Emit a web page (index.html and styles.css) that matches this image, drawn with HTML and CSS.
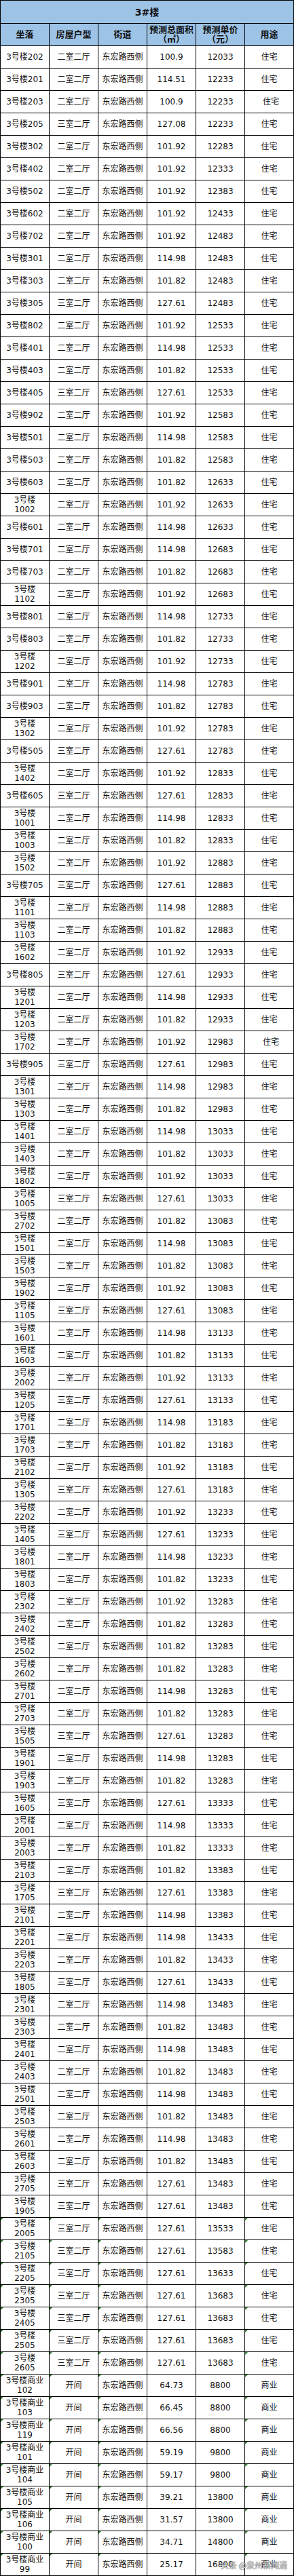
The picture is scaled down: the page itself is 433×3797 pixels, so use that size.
FILE: index.html
```html
<!DOCTYPE html>
<html lang="zh-CN">
<head>
<meta charset="utf-8">
<title>3#楼</title>
<link rel="stylesheet" href="styles.css">
</head>
<body>
<div class="sheet">
<table class="price">
<colgroup><col class="c"><col class="c"><col class="c"><col class="c"><col class="c"><col class="c"></colgroup>
<thead>
<tr class="title"><th colspan="6">3#楼</th></tr>
<tr class="head"><th>坐落</th><th>房屋户型</th><th>街道</th><th>预测总面积<br>（㎡）</th><th>预测单价<br>（元）</th><th>用途</th></tr>
</thead>
<tbody>
<tr><td>3号楼202</td><td>二室二厅</td><td>东宏路西侧</td><td>100.9</td><td>12033</td><td>住宅</td></tr>
<tr><td>3号楼201</td><td>二室二厅</td><td>东宏路西侧</td><td>114.51</td><td>12233</td><td>住宅</td></tr>
<tr><td>3号楼203</td><td>二室二厅</td><td>东宏路西侧</td><td>100.9</td><td>12233</td><td class="sh">住宅</td></tr>
<tr><td>3号楼205</td><td>三室二厅</td><td>东宏路西侧</td><td>127.08</td><td>12233</td><td>住宅</td></tr>
<tr><td>3号楼302</td><td>二室二厅</td><td>东宏路西侧</td><td>101.92</td><td>12283</td><td>住宅</td></tr>
<tr><td>3号楼402</td><td>二室二厅</td><td>东宏路西侧</td><td>101.92</td><td>12333</td><td>住宅</td></tr>
<tr><td>3号楼502</td><td>二室二厅</td><td>东宏路西侧</td><td>101.92</td><td>12383</td><td>住宅</td></tr>
<tr><td>3号楼602</td><td>二室二厅</td><td>东宏路西侧</td><td>101.92</td><td>12433</td><td>住宅</td></tr>
<tr><td>3号楼702</td><td>二室二厅</td><td>东宏路西侧</td><td>101.92</td><td>12483</td><td>住宅</td></tr>
<tr><td>3号楼301</td><td>二室二厅</td><td>东宏路西侧</td><td>114.98</td><td>12483</td><td>住宅</td></tr>
<tr><td>3号楼303</td><td>二室二厅</td><td>东宏路西侧</td><td>101.82</td><td>12483</td><td>住宅</td></tr>
<tr><td>3号楼305</td><td>三室二厅</td><td>东宏路西侧</td><td>127.61</td><td>12483</td><td>住宅</td></tr>
<tr><td>3号楼802</td><td>二室二厅</td><td>东宏路西侧</td><td>101.92</td><td>12533</td><td>住宅</td></tr>
<tr><td>3号楼401</td><td>二室二厅</td><td>东宏路西侧</td><td>114.98</td><td>12533</td><td>住宅</td></tr>
<tr><td>3号楼403</td><td>二室二厅</td><td>东宏路西侧</td><td>101.82</td><td>12533</td><td>住宅</td></tr>
<tr><td>3号楼405</td><td>三室二厅</td><td>东宏路西侧</td><td>127.61</td><td>12533</td><td>住宅</td></tr>
<tr><td>3号楼902</td><td>二室二厅</td><td>东宏路西侧</td><td>101.92</td><td>12583</td><td>住宅</td></tr>
<tr><td>3号楼501</td><td>二室二厅</td><td>东宏路西侧</td><td>114.98</td><td>12583</td><td>住宅</td></tr>
<tr><td>3号楼503</td><td>二室二厅</td><td>东宏路西侧</td><td>101.82</td><td>12583</td><td>住宅</td></tr>
<tr><td>3号楼603</td><td>二室二厅</td><td>东宏路西侧</td><td>101.82</td><td>12633</td><td>住宅</td></tr>
<tr><td>3号楼<br>1002</td><td>二室二厅</td><td>东宏路西侧</td><td>101.92</td><td>12633</td><td>住宅</td></tr>
<tr><td>3号楼601</td><td>二室二厅</td><td>东宏路西侧</td><td>114.98</td><td>12633</td><td>住宅</td></tr>
<tr><td>3号楼701</td><td>二室二厅</td><td>东宏路西侧</td><td>114.98</td><td>12683</td><td>住宅</td></tr>
<tr><td>3号楼703</td><td>二室二厅</td><td>东宏路西侧</td><td>101.82</td><td>12683</td><td>住宅</td></tr>
<tr><td>3号楼<br>1102</td><td>二室二厅</td><td>东宏路西侧</td><td>101.92</td><td>12683</td><td>住宅</td></tr>
<tr><td>3号楼801</td><td>二室二厅</td><td>东宏路西侧</td><td>114.98</td><td>12733</td><td>住宅</td></tr>
<tr><td>3号楼803</td><td>二室二厅</td><td>东宏路西侧</td><td>101.82</td><td>12733</td><td>住宅</td></tr>
<tr><td>3号楼<br>1202</td><td>二室二厅</td><td>东宏路西侧</td><td>101.92</td><td>12733</td><td>住宅</td></tr>
<tr><td>3号楼901</td><td>二室二厅</td><td>东宏路西侧</td><td>114.98</td><td>12783</td><td>住宅</td></tr>
<tr><td>3号楼903</td><td>二室二厅</td><td>东宏路西侧</td><td>101.82</td><td>12783</td><td>住宅</td></tr>
<tr><td>3号楼<br>1302</td><td>二室二厅</td><td>东宏路西侧</td><td>101.92</td><td>12783</td><td>住宅</td></tr>
<tr><td>3号楼505</td><td>三室二厅</td><td>东宏路西侧</td><td>127.61</td><td>12783</td><td>住宅</td></tr>
<tr><td>3号楼<br>1402</td><td>二室二厅</td><td>东宏路西侧</td><td>101.92</td><td>12833</td><td>住宅</td></tr>
<tr><td>3号楼605</td><td>三室二厅</td><td>东宏路西侧</td><td>127.61</td><td>12833</td><td>住宅</td></tr>
<tr><td>3号楼<br>1001</td><td>二室二厅</td><td>东宏路西侧</td><td>114.98</td><td>12833</td><td>住宅</td></tr>
<tr><td>3号楼<br>1003</td><td>二室二厅</td><td>东宏路西侧</td><td>101.82</td><td>12833</td><td>住宅</td></tr>
<tr><td>3号楼<br>1502</td><td>二室二厅</td><td>东宏路西侧</td><td>101.92</td><td>12883</td><td>住宅</td></tr>
<tr><td>3号楼705</td><td>三室二厅</td><td>东宏路西侧</td><td>127.61</td><td>12883</td><td>住宅</td></tr>
<tr><td>3号楼<br>1101</td><td>二室二厅</td><td>东宏路西侧</td><td>114.98</td><td>12883</td><td>住宅</td></tr>
<tr><td>3号楼<br>1103</td><td>二室二厅</td><td>东宏路西侧</td><td>101.82</td><td>12883</td><td>住宅</td></tr>
<tr><td>3号楼<br>1602</td><td>二室二厅</td><td>东宏路西侧</td><td>101.92</td><td>12933</td><td>住宅</td></tr>
<tr><td>3号楼805</td><td>三室二厅</td><td>东宏路西侧</td><td>127.61</td><td>12933</td><td>住宅</td></tr>
<tr><td>3号楼<br>1201</td><td>二室二厅</td><td>东宏路西侧</td><td>114.98</td><td>12933</td><td>住宅</td></tr>
<tr><td>3号楼<br>1203</td><td>二室二厅</td><td>东宏路西侧</td><td>101.82</td><td>12933</td><td>住宅</td></tr>
<tr><td>3号楼<br>1702</td><td>二室二厅</td><td>东宏路西侧</td><td>101.92</td><td>12983</td><td class="sh">住宅</td></tr>
<tr><td>3号楼905</td><td>三室二厅</td><td>东宏路西侧</td><td>127.61</td><td>12983</td><td>住宅</td></tr>
<tr><td>3号楼<br>1301</td><td>二室二厅</td><td>东宏路西侧</td><td>114.98</td><td>12983</td><td>住宅</td></tr>
<tr><td>3号楼<br>1303</td><td>二室二厅</td><td>东宏路西侧</td><td>101.82</td><td>12983</td><td>住宅</td></tr>
<tr><td>3号楼<br>1401</td><td>二室二厅</td><td>东宏路西侧</td><td>114.98</td><td>13033</td><td>住宅</td></tr>
<tr><td>3号楼<br>1403</td><td>二室二厅</td><td>东宏路西侧</td><td>101.82</td><td>13033</td><td>住宅</td></tr>
<tr><td>3号楼<br>1802</td><td>二室二厅</td><td>东宏路西侧</td><td>101.92</td><td>13033</td><td>住宅</td></tr>
<tr><td>3号楼<br>1005</td><td>三室二厅</td><td>东宏路西侧</td><td>127.61</td><td>13033</td><td>住宅</td></tr>
<tr><td>3号楼<br>2702</td><td>二室二厅</td><td>东宏路西侧</td><td>101.82</td><td>13083</td><td>住宅</td></tr>
<tr><td>3号楼<br>1501</td><td>二室二厅</td><td>东宏路西侧</td><td>114.98</td><td>13083</td><td>住宅</td></tr>
<tr><td>3号楼<br>1503</td><td>二室二厅</td><td>东宏路西侧</td><td>101.82</td><td>13083</td><td>住宅</td></tr>
<tr><td>3号楼<br>1902</td><td>二室二厅</td><td>东宏路西侧</td><td>101.92</td><td>13083</td><td>住宅</td></tr>
<tr><td>3号楼<br>1105</td><td>三室二厅</td><td>东宏路西侧</td><td>127.61</td><td>13083</td><td>住宅</td></tr>
<tr><td>3号楼<br>1601</td><td>二室二厅</td><td>东宏路西侧</td><td>114.98</td><td>13133</td><td>住宅</td></tr>
<tr><td>3号楼<br>1603</td><td>二室二厅</td><td>东宏路西侧</td><td>101.82</td><td>13133</td><td>住宅</td></tr>
<tr><td>3号楼<br>2002</td><td>二室二厅</td><td>东宏路西侧</td><td>101.92</td><td>13133</td><td>住宅</td></tr>
<tr><td>3号楼<br>1205</td><td>三室二厅</td><td>东宏路西侧</td><td>127.61</td><td>13133</td><td>住宅</td></tr>
<tr><td>3号楼<br>1701</td><td>二室二厅</td><td>东宏路西侧</td><td>114.98</td><td>13183</td><td>住宅</td></tr>
<tr><td>3号楼<br>1703</td><td>二室二厅</td><td>东宏路西侧</td><td>101.82</td><td>13183</td><td>住宅</td></tr>
<tr><td>3号楼<br>2102</td><td>二室二厅</td><td>东宏路西侧</td><td>101.92</td><td>13183</td><td>住宅</td></tr>
<tr><td>3号楼<br>1305</td><td>三室二厅</td><td>东宏路西侧</td><td>127.61</td><td>13183</td><td>住宅</td></tr>
<tr><td>3号楼<br>2202</td><td>二室二厅</td><td>东宏路西侧</td><td>101.92</td><td>13233</td><td>住宅</td></tr>
<tr><td>3号楼<br>1405</td><td>三室二厅</td><td>东宏路西侧</td><td>127.61</td><td>13233</td><td>住宅</td></tr>
<tr><td>3号楼<br>1801</td><td>二室二厅</td><td>东宏路西侧</td><td>114.98</td><td>13233</td><td>住宅</td></tr>
<tr><td>3号楼<br>1803</td><td>二室二厅</td><td>东宏路西侧</td><td>101.82</td><td>13233</td><td>住宅</td></tr>
<tr><td>3号楼<br>2302</td><td>二室二厅</td><td>东宏路西侧</td><td>101.92</td><td>13283</td><td>住宅</td></tr>
<tr><td>3号楼<br>2402</td><td>二室二厅</td><td>东宏路西侧</td><td>101.82</td><td>13283</td><td>住宅</td></tr>
<tr><td>3号楼<br>2502</td><td>二室二厅</td><td>东宏路西侧</td><td>101.82</td><td>13283</td><td>住宅</td></tr>
<tr><td>3号楼<br>2602</td><td>二室二厅</td><td>东宏路西侧</td><td>101.82</td><td>13283</td><td>住宅</td></tr>
<tr><td>3号楼<br>2701</td><td>二室二厅</td><td>东宏路西侧</td><td>114.98</td><td>13283</td><td>住宅</td></tr>
<tr><td>3号楼<br>2703</td><td>二室二厅</td><td>东宏路西侧</td><td>101.82</td><td>13283</td><td>住宅</td></tr>
<tr><td>3号楼<br>1505</td><td>三室二厅</td><td>东宏路西侧</td><td>127.61</td><td>13283</td><td>住宅</td></tr>
<tr><td>3号楼<br>1901</td><td>二室二厅</td><td>东宏路西侧</td><td>114.98</td><td>13283</td><td>住宅</td></tr>
<tr><td>3号楼<br>1903</td><td>二室二厅</td><td>东宏路西侧</td><td>101.82</td><td>13283</td><td>住宅</td></tr>
<tr><td>3号楼<br>1605</td><td>三室二厅</td><td>东宏路西侧</td><td>127.61</td><td>13333</td><td>住宅</td></tr>
<tr><td>3号楼<br>2001</td><td>二室二厅</td><td>东宏路西侧</td><td>114.98</td><td>13333</td><td>住宅</td></tr>
<tr><td>3号楼<br>2003</td><td>二室二厅</td><td>东宏路西侧</td><td>101.82</td><td>13333</td><td>住宅</td></tr>
<tr><td>3号楼<br>2103</td><td>二室二厅</td><td>东宏路西侧</td><td>101.82</td><td>13383</td><td>住宅</td></tr>
<tr><td>3号楼<br>1705</td><td>三室二厅</td><td>东宏路西侧</td><td>127.61</td><td>13383</td><td>住宅</td></tr>
<tr><td>3号楼<br>2101</td><td>二室二厅</td><td>东宏路西侧</td><td>114.98</td><td>13383</td><td>住宅</td></tr>
<tr><td>3号楼<br>2201</td><td>二室二厅</td><td>东宏路西侧</td><td>114.98</td><td>13433</td><td>住宅</td></tr>
<tr><td>3号楼<br>2203</td><td>二室二厅</td><td>东宏路西侧</td><td>101.82</td><td>13433</td><td>住宅</td></tr>
<tr><td>3号楼<br>1805</td><td>三室二厅</td><td>东宏路西侧</td><td>127.61</td><td>13433</td><td>住宅</td></tr>
<tr><td>3号楼<br>2301</td><td>二室二厅</td><td>东宏路西侧</td><td>114.98</td><td>13483</td><td>住宅</td></tr>
<tr><td>3号楼<br>2303</td><td>二室二厅</td><td>东宏路西侧</td><td>101.82</td><td>13483</td><td>住宅</td></tr>
<tr><td>3号楼<br>2401</td><td>二室二厅</td><td>东宏路西侧</td><td>114.98</td><td>13483</td><td>住宅</td></tr>
<tr><td>3号楼<br>2403</td><td>二室二厅</td><td>东宏路西侧</td><td>101.82</td><td>13483</td><td>住宅</td></tr>
<tr><td>3号楼<br>2501</td><td>二室二厅</td><td>东宏路西侧</td><td>114.98</td><td>13483</td><td>住宅</td></tr>
<tr><td>3号楼<br>2503</td><td>二室二厅</td><td>东宏路西侧</td><td>101.82</td><td>13483</td><td>住宅</td></tr>
<tr><td>3号楼<br>2601</td><td>二室二厅</td><td>东宏路西侧</td><td>114.98</td><td>13483</td><td>住宅</td></tr>
<tr><td>3号楼<br>2603</td><td>二室二厅</td><td>东宏路西侧</td><td>101.82</td><td>13483</td><td>住宅</td></tr>
<tr><td>3号楼<br>2705</td><td>三室二厅</td><td>东宏路西侧</td><td>127.61</td><td>13483</td><td>住宅</td></tr>
<tr><td>3号楼<br>1905</td><td>三室二厅</td><td>东宏路西侧</td><td>127.61</td><td>13483</td><td>住宅</td></tr>
<tr class="flag"><td>3号楼<br>2005</td><td>三室二厅</td><td>东宏路西侧</td><td>127.61</td><td>13533</td><td>住宅</td></tr>
<tr class="flag"><td>3号楼<br>2105</td><td>三室二厅</td><td>东宏路西侧</td><td>127.61</td><td>13583</td><td>住宅</td></tr>
<tr class="flag"><td>3号楼<br>2205</td><td>三室二厅</td><td>东宏路西侧</td><td>127.61</td><td>13633</td><td>住宅</td></tr>
<tr class="flag"><td>3号楼<br>2305</td><td>三室二厅</td><td>东宏路西侧</td><td>127.61</td><td>13683</td><td>住宅</td></tr>
<tr class="flag"><td>3号楼<br>2405</td><td>三室二厅</td><td>东宏路西侧</td><td>127.61</td><td>13683</td><td>住宅</td></tr>
<tr class="flag"><td>3号楼<br>2505</td><td>三室二厅</td><td>东宏路西侧</td><td>127.61</td><td>13683</td><td>住宅</td></tr>
<tr class="flag"><td>3号楼<br>2605</td><td>三室二厅</td><td>东宏路西侧</td><td>127.61</td><td>13683</td><td>住宅</td></tr>
<tr class="flag"><td>3号楼商业<br>102</td><td>开间</td><td>东宏路西侧</td><td>64.73</td><td>8800</td><td>商业</td></tr>
<tr class="flag"><td>3号楼商业<br>103</td><td>开间</td><td>东宏路西侧</td><td>66.45</td><td>8800</td><td>商业</td></tr>
<tr class="flag"><td>3号楼商业<br>119</td><td>开间</td><td>东宏路西侧</td><td>66.56</td><td>8800</td><td>商业</td></tr>
<tr class="flag"><td>3号楼商业<br>101</td><td>开间</td><td>东宏路西侧</td><td>59.19</td><td>9800</td><td>商业</td></tr>
<tr class="flag"><td>3号楼商业<br>104</td><td>开间</td><td>东宏路西侧</td><td>59.17</td><td>9800</td><td>商业</td></tr>
<tr class="flag"><td>3号楼商业<br>105</td><td>开间</td><td>东宏路西侧</td><td>39.21</td><td>13800</td><td>商业</td></tr>
<tr class="flag"><td>3号楼商业<br>106</td><td>开间</td><td>东宏路西侧</td><td>31.57</td><td>13800</td><td>商业</td></tr>
<tr class="flag"><td>3号楼商业<br>100</td><td>开间</td><td>东宏路西侧</td><td>34.71</td><td>14800</td><td>商业</td></tr>
<tr class="flag"><td>3号楼商业<br>99</td><td>开间</td><td>东宏路西侧</td><td>25.17</td><td>16800</td><td>商业</td></tr>
</tbody>
</table>
<div class="watermark">头条 @泉州新闻通</div>
</div>
</body>
</html>
```
FILE: styles.css
```css
html, body {
  margin: 0;
  padding: 0;
  background: #fff;
}
.sheet {
  position: relative;
  width: 433px;
}
.price {
  border-collapse: collapse;
  table-layout: fixed;
  width: 433px;
  font-family: "DejaVu Sans", "Noto Sans CJK SC", sans-serif;
  font-size: 12px;
  line-height: 14px;
  color: #111;
}
.price col.c {
  width: 72px;
}
.price th,
.price td {
  border: 1px solid #000;
  padding: 0;
  text-align: center;
  vertical-align: middle;
  white-space: nowrap;
  position: relative;
}
.price tr {
  height: 33px;
}
.price tr.title {
  height: 34px;
}
.price .title th {
  background: #9dc3e6;
  font-size: 14px;
  font-weight: bold;
}
.price .head th {
  background: #9dc3e6;
  font-size: 13px;
  font-weight: bold;
}
.price td.sh {
  padding-left: 5px;
}
.flag td:nth-child(1)::before,
.flag td:nth-child(2)::before,
.flag td:nth-child(3)::before,
.flag td:nth-child(6)::before {
  content: "";
  position: absolute;
  left: 0;
  top: 0;
  width: 0;
  height: 0;
  border-top: 4px solid #2f7d2f;
  border-right: 4px solid transparent;
}
.watermark {
  position: absolute;
  right: 10px;
  bottom: 9px;
  font-family: "Noto Sans CJK SC", sans-serif;
  font-size: 12px;
  line-height: 14px;
  color: rgba(235, 235, 235, 0.85);
  text-shadow: 0 0 1px #555, 0 0 1px #555;
  white-space: nowrap;
}
```
